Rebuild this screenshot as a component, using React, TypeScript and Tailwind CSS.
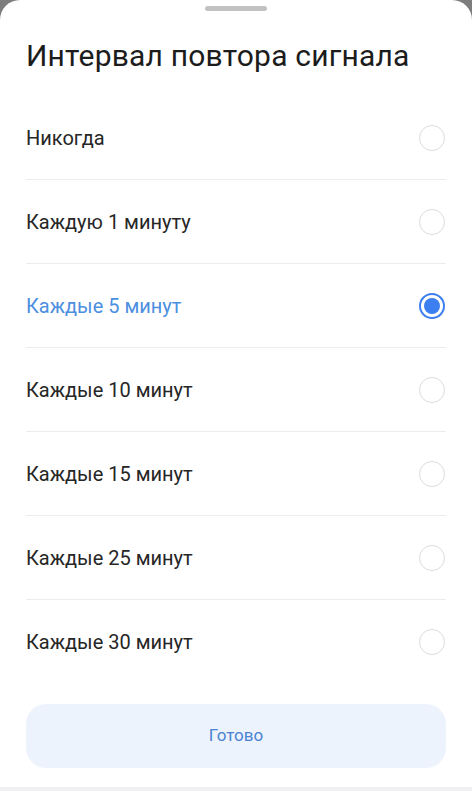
const options = [
  'Никогда',
  'Каждую 1 минуту',
  'Каждые 5 минут',
  'Каждые 10 минут',
  'Каждые 15 минут',
  'Каждые 25 минут',
  'Каждые 30 минут',
];

export default function App() {
  const selected = 2;

  return (
    <div className="w-[472px] h-[791px] bg-[#7d7d7d] overflow-hidden" style={{ fontFamily: 'Roboto, "Noto Sans", sans-serif' }}>
      <div className="h-full bg-white rounded-t-[20px] flex flex-col">
        <div className="flex justify-center pt-[6px]">
          <div className="w-[62px] h-[5px] rounded-full bg-[#c2c2c2]" />
        </div>
        <h1 className="px-[26px] pt-[25px] text-[30px] leading-[40px] text-[#1c1c1c] tracking-[0.2px]">Интервал повтора сигнала</h1>

        <div className="mt-[20px] px-[26px]">
          {options.map((label, i) => {
            const active = i === selected;
            return (
              <div
                key={label}
                className={`h-[84px] flex items-center justify-between ${i < options.length - 1 ? 'border-b border-[#ececec]' : ''}`}
              >
                <span className={`text-[20px] ${active ? 'text-[#4c8fe0]' : 'text-[#262626]'}`}>{label}</span>
                {active ? (
                  <span className="w-[26px] h-[26px] rounded-full border-[2px] border-[#3b7ff0] flex items-center justify-center mr-[1px]">
                    <span className="w-[16px] h-[16px] rounded-full bg-[#3b7ff0]" />
                  </span>
                ) : (
                  <span className="w-[26px] h-[26px] rounded-full border-[1.5px] border-[#dcdcdc] mr-[1px]" />
                )}
              </div>
            );
          })}
        </div>

        <div className="px-[26px] mt-[20px]">
          <button className="w-full h-[64px] rounded-[20px] bg-[#edf3fd] text-[#4a83d2] text-[17px]">Готово</button>
        </div>
        <div className="flex-1" />
        <div className="h-[4px] bg-[#f0f0f2]" />
      </div>
    </div>
  );
}
